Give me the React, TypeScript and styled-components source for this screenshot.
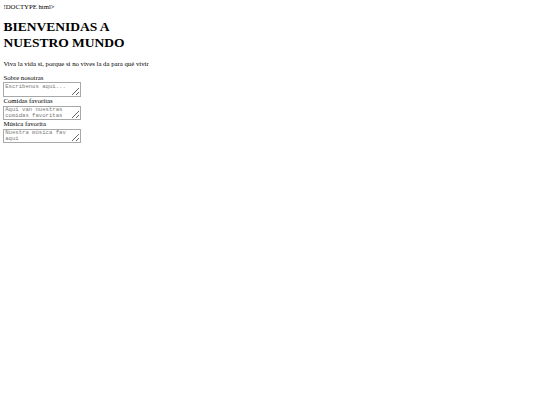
import { FC } from 'react';
import { styled, createGlobalStyle } from 'styled-components';

// the page was taken at 1280px wide and shrunk to 540px, so every size is * 0.421875
const GlobalStyle = createGlobalStyle`
    html {
        background: #ffffff;
    }
    body {
        margin: 3.4px;
        font-family: "Liberation Serif", "Times New Roman", serif;
        font-size: 6.75px;
        color: #000000;
    }
`;

const Stray = styled.div``;

const Title = styled.h1`
    font-size: 13.5px;
    font-weight: bold;
    margin: 9px 0;
`;

const Tagline = styled.p`
    margin: 6.75px 0;
`;

const Form = styled.form``;

const Field = styled.div``;

const Label = styled.label`
    color: #000;
`;

const TextBox = styled.textarea`
    box-sizing: border-box;
    width: 77.5px;
    height: 14.8px;
    margin: 1.3px 0 0;
    padding: 0.6px 0.8px;
    font-family: "Liberation Mono", "Courier New", monospace;
    font-size: 5.625px;
    line-height: 6px;
    border: 1px solid #a8a8a8;
    color: #000;
    vertical-align: bottom;
    resize: both;
    overflow: hidden;
    &::placeholder {
        color: #7a7a7a;
    }
`;

const fields = [
    { label: 'Sobre nosotras', placeholder: 'Escribenos aqui...' },
    { label: 'Comidas favoritas', placeholder: 'Aqui van nuestras comidas favoritas' },
    { label: 'Música favorita', placeholder: 'Nuestra música fav aqui' },
];

const App: FC = () => (
    <>
      <GlobalStyle />
      <Stray>!DOCTYPE html&gt;</Stray>
      <Title>
        BIENVENIDAS A<br />
        NUESTRO MUNDO
      </Title>
      <Tagline>Viva la vida si, porque si no vives la da para qué vivir</Tagline>
      <Form>
        {fields.map((f) => (
          <Field key={f.label}>
            <Label>{f.label}</Label>
            <br />
            <TextBox placeholder={f.placeholder} />
          </Field>
        ))}
      </Form>
    </>
);

export default App;
